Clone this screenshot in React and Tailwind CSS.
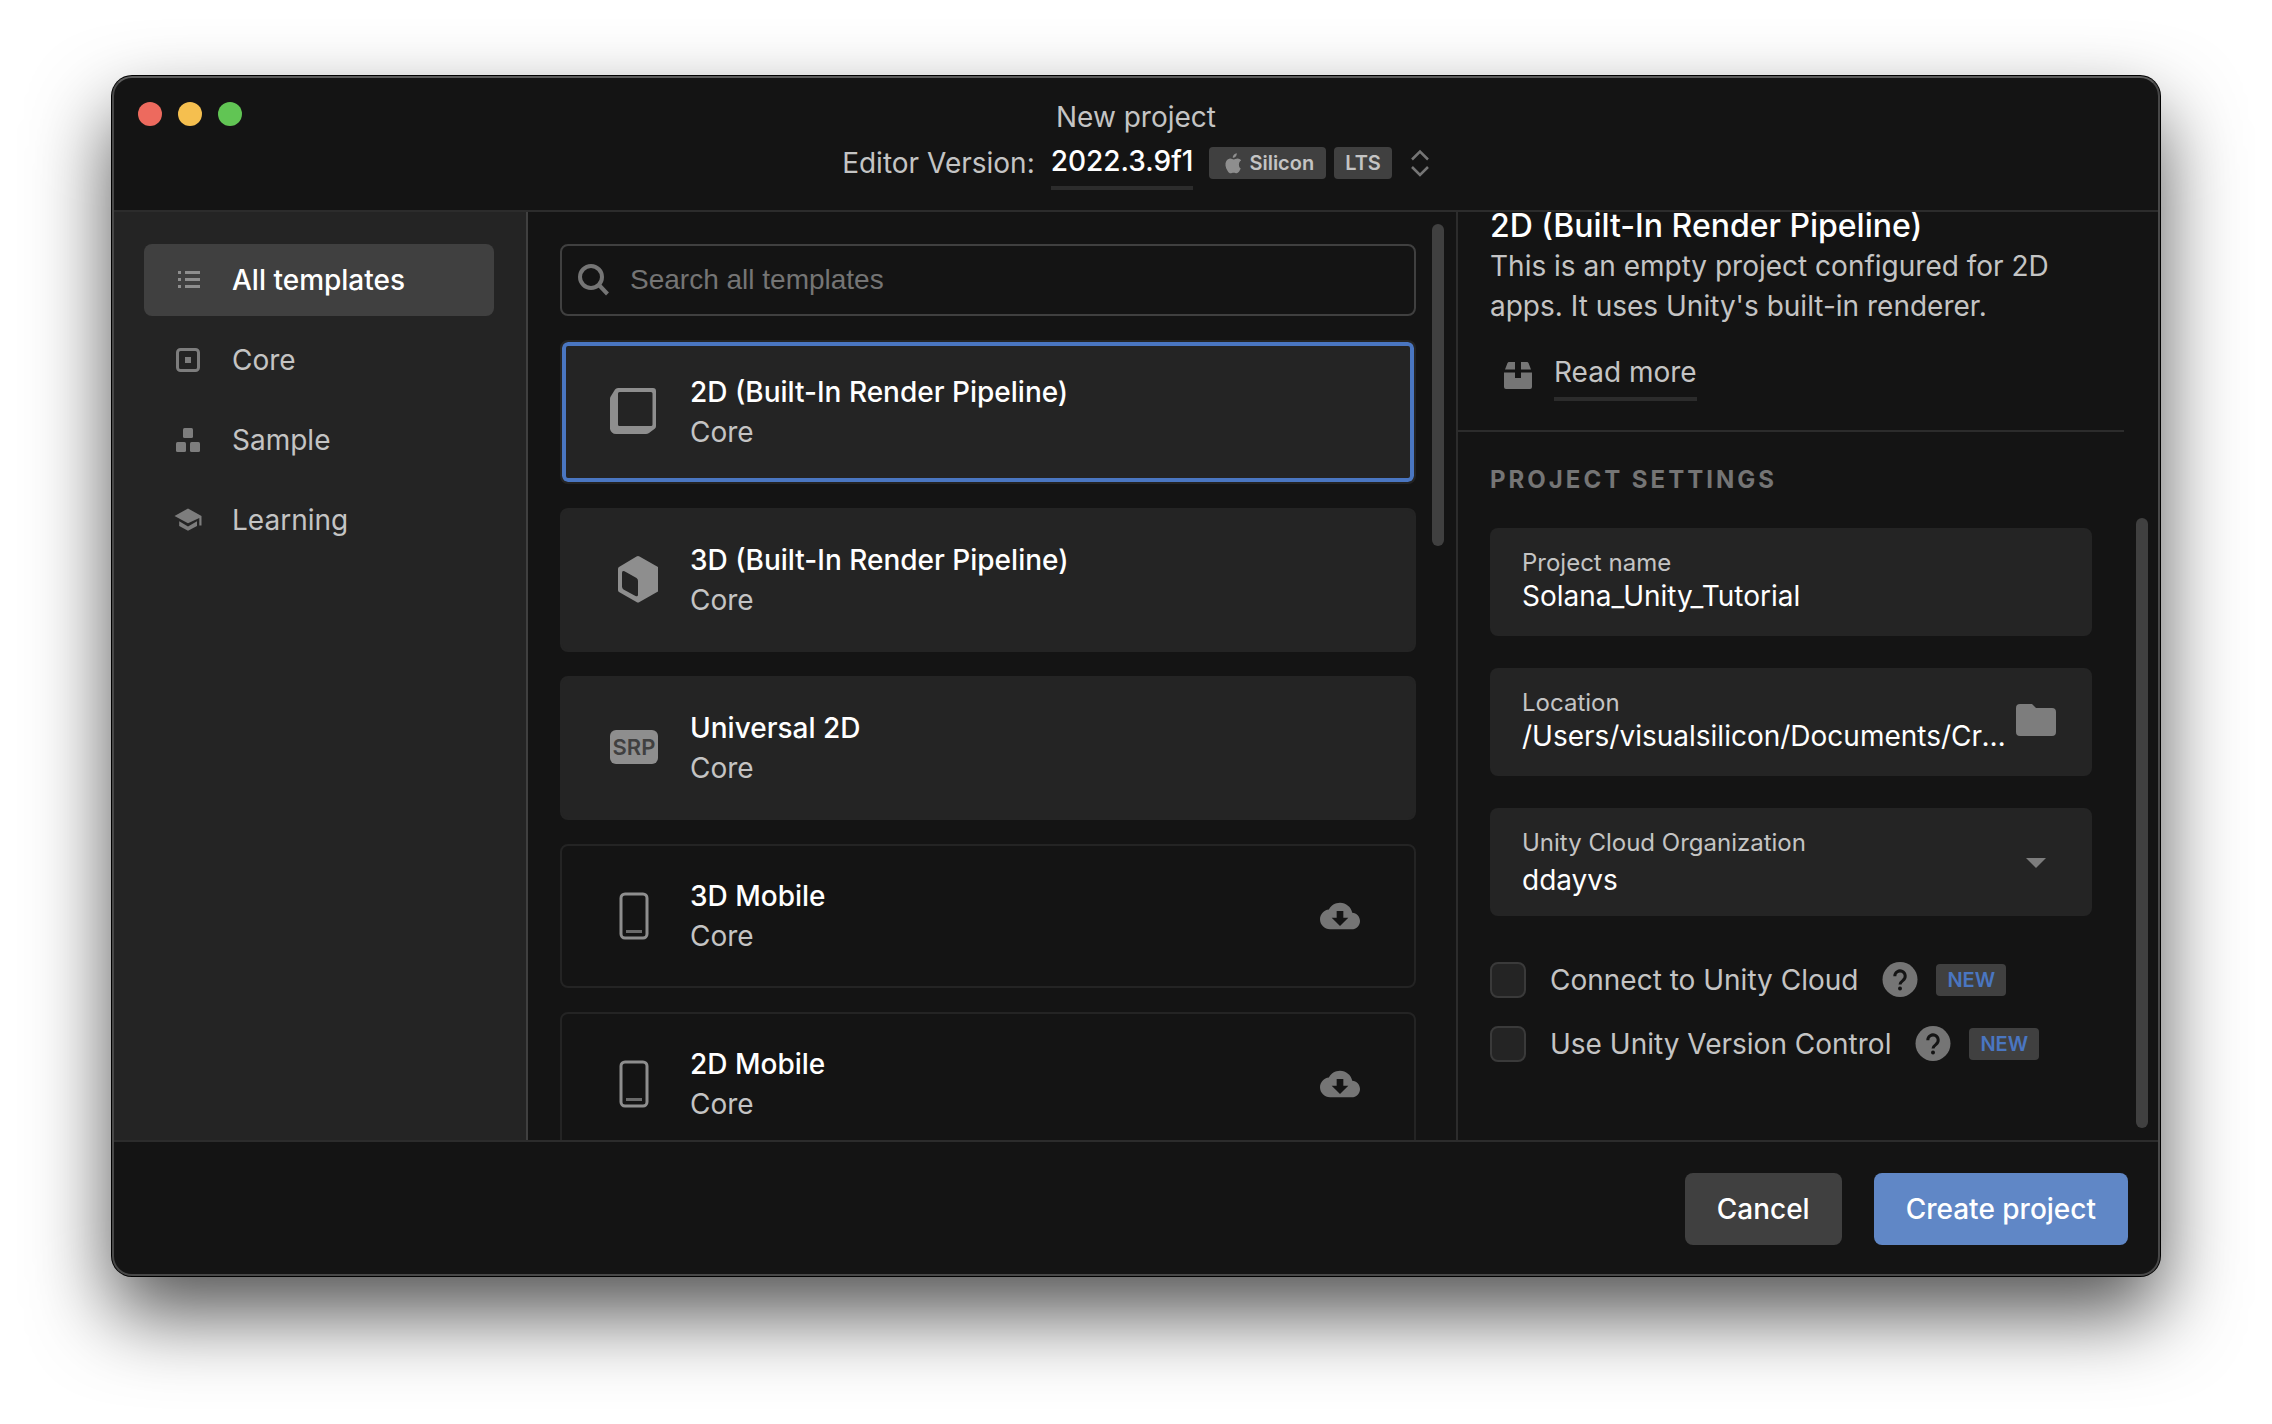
import { useState } from 'react';

const NAV = ['All templates', 'Core', 'Sample', 'Learning'];

function NavIcon({ name }) {
  return (
    <svg viewBox="0 0 28 28" className="size-7 shrink-0" fill="currentColor" aria-hidden="true">
      {name === 'All templates' && (
        <>
          <path d="M4 5h3v3H4zM4 12h3v3H4zM4 19h3v3H4z" />
          <path d="M11 5h15v3H11zM11 12h15v3H11zM11 19h15v3H11z" />
        </>
      )}
      {name === 'Core' && (
        <>
          <rect x="3.5" y="3.5" width="21" height="21" rx="3" fill="none" stroke="currentColor" strokeWidth="3" />
          <rect x="11" y="11" width="6" height="6" />
        </>
      )}
      {name === 'Sample' && (
        <>
          <rect x="9" y="2" width="10" height="10" rx="1.5" />
          <rect x="2" y="16" width="10" height="10" rx="1.5" />
          <rect x="16" y="16" width="10" height="10" rx="1.5" />
        </>
      )}
      {name === 'Learning' && (
        <>
          <path d="M0.5 10 14 2.500l13.500 7.500v9.500h-2.200v-7.600L14 17.300z" />
          <path d="M5.200 15.200 14 20.400l9-5.200v4.800L14 24.800 5.200 20z" />
        </>
      )}
    </svg>
  );
}

function TemplateIcon({ kind }) {
  return (
    <svg viewBox="0 0 64 64" className="size-16 shrink-0 text-[#8e8e8e]" fill="currentColor" aria-hidden="true">
      {kind === '2d' && (
        <path
          fillRule="evenodd"
          d="M16 8h35q3 0 3 3v35q0 1.500-1 2.500l-6 4.500q-1.500 1-3 1H14q-2.500 0-4-1.500T8 49V19q0-2 1-3l4-6.500Q14 8 16 8zM17.500 12q-1.500 0-1.500 1.500v31q0 1.500 1.500 1.500h31.500q1.500 0 1.500-1.500v-31q0-1.500-1.500-1.500z"
        />
      )}
      {kind === '3d' && (
        <path
          fillRule="evenodd"
          d="M34.500 8.500q1.500-1 3 0L56 19v24.500L37.500 54q-1.500 1-3 0L17 44q-1-.5-1-2V21q0-1.500 1-2zM20 25v13.500q0 2 1.500 3l12 6.500q2.500 1.200 2.500-1.500V33q0-2-1.500-3l-12-6.700Q20 22 20 25z"
        />
      )}
      {kind === 'srp' && (
        <>
          <rect x="8" y="14" width="48" height="34" rx="6" />
          <text x="32" y="39" textAnchor="middle" fontFamily="Inter, sans-serif" fontSize="22" fontWeight="600" fill="#404040">
            SRP
          </text>
        </>
      )}
      {kind === 'mobile' && (
        <>
          <rect x="19" y="10" width="26" height="44" rx="4" fill="none" stroke="currentColor" strokeWidth="3" />
          <rect x="24" y="46" width="16" height="3" opacity="0.7" />
        </>
      )}
    </svg>
  );
}

const TEMPLATES = [
  { name: '2D (Built-In Render Pipeline)', kind: '2d', installed: true },
  { name: '3D (Built-In Render Pipeline)', kind: '3d', installed: true },
  { name: 'Universal 2D', kind: 'srp', installed: true },
  { name: '3D Mobile', kind: 'mobile', installed: false },
  { name: '2D Mobile', kind: 'mobile', installed: false },
];

function TemplateCard({ template, selected, onSelect }) {
  return (
    <button
      type="button"
      aria-pressed={selected}
      onClick={onSelect}
      className={
        'flex h-36 w-full shrink-0 items-center rounded-lg border-2 border-[#242424] pr-[54px] pl-10 text-left ' +
        (template.installed ? 'bg-[#242424] ' : '') +
        (selected ? 'inset-ring-4 inset-ring-[#4a76c1]' : '')
      }
    >
      <TemplateIcon kind={template.kind} />
      <span className="ml-6 flex-1 leading-10">
        <span className="block font-medium text-white">{template.name}</span>
        <span className="block">Core</span>
      </span>
      {!template.installed && (
        <svg viewBox="0 0 24 24" className="size-10 text-[#757575]" fill="currentColor" aria-hidden="true">
          <path d="M19.350 10.040C18.670 6.590 15.640 4 12 4 9.110 4 6.600 5.640 5.350 8.040 2.340 8.360 0 10.910 0 14c0 3.310 2.690 6 6 6h13c2.760 0 5-2.240 5-5 0-2.640-2.050-4.780-4.650-4.960zM17 13l-5 5-5-5h3V9h4v4h3z" />
        </svg>
      )}
    </button>
  );
}

function Cap({ id, children }) {
  return (
    <label htmlFor={id} className="block text-2xl leading-8">
      {children}
    </label>
  );
}

function CheckRow({ id, children }) {
  return (
    <div className="flex h-9 items-center">
      <input
        id={id}
        type="checkbox"
        className="size-9 shrink-0 appearance-none rounded-lg border-2 border-[#3a3a3a] bg-[#242424] checked:bg-[#4a76c1]"
      />
      <label htmlFor={id} className="ml-6">
        {children}
      </label>
      <button type="button" aria-label="Help" className="ml-6">
        <svg viewBox="0 0 36 36" className="size-9" aria-hidden="true">
          <circle cx="18" cy="17.500" r="17.500" fill="#757575" />
          <path d="M12.800 14.200a5.200 5.200 0 1 1 8.300 4.100c-2 1.500-3.100 2.300-3.100 4.300" fill="none" stroke="#141414" strokeWidth="3" />
          <circle cx="18" cy="26.400" r="2" fill="#141414" />
        </svg>
      </button>
      <span className="ml-[18px] rounded bg-[#404040] px-[11px] text-xl leading-8 font-semibold text-[#4a76c1]">NEW</span>
    </div>
  );
}

export default function App() {
  const [nav, setNav] = useState(NAV[0]);
  const [selected, setSelected] = useState(0);
  return (
    <div className="flex h-screen flex-col bg-white px-28 pt-19 pb-37 font-['Inter',sans-serif] text-[28px] text-[#c4c4c4]">
      <main className="flex min-h-0 flex-1 flex-col overflow-hidden rounded-[20px] border-2 border-t-[#5c5c5c] border-r-[#484848] border-b-[#484848] border-l-[#484848] bg-[#141414] shadow-[0_0_0_1px_#000,0_38px_80px_rgba(0,0,0,0.68)]">
        <header className="grid h-[134px] shrink-0 grid-cols-[1fr_auto_1fr] border-b-2 border-[#2c2c2c] px-6">
          <div className="flex gap-4 pt-6">
            <button type="button" aria-label="Close" className="size-6 rounded-full bg-[#ed6a5e]" />
            <button type="button" aria-label="Minimize" className="size-6 rounded-full bg-[#f5bf4f]" />
            <button type="button" aria-label="Zoom" className="size-6 rounded-full bg-[#61c554]" />
          </div>
          <div className="flex flex-col items-center pt-5">
            <h1 className="leading-[38px]">New project</h1>
            <div className="flex items-start">
              <span className="mt-1 leading-[46px]">Editor Version:</span>
              <button type="button" className="ml-4 flex items-start">
                <span className="border-b-4 border-[#2c2c2c] leading-[50px] font-medium text-white">2022.3.9f1</span>
                <span className="mt-[11px] ml-4 flex items-center gap-1 rounded bg-[#404040] px-3 text-xl leading-8 font-semibold">
                  <svg viewBox="0 0 24 24" className="size-6 text-[#8e8e8e]" fill="currentColor" aria-hidden="true">
                    <path d="M19.800 17.600c-.5 1.200-1.100 2.100-1.700 3-.9 1.200-1.700 1.700-2.600 1.700-.8 0-1.600-.6-2.900-.6s-2.200.6-3 .6c-1 0-1.900-.8-2.800-2.100C4.300 16.800 3.800 12.600 5.200 10.200 6.200 8.500 7.800 7.600 9.300 7.600c1.400 0 2.300.8 3.500.8 1.100 0 2.100-.9 3.800-.9 1.300 0 2.600.7 3.500 1.900-3.100 1.700-2.600 6.700-.3 8.200zM15.800 2.200c.2 2.400-1.800 4.700-4 4.600-.2-2.100 1.800-4.400 4-4.600z" />
                  </svg>
                  Silicon
                </span>
                <span className="mt-[11px] ml-2 rounded bg-[#404040] px-[11px] text-xl leading-8 font-semibold">LTS</span>
                <svg viewBox="0 0 20 28" className="mt-[13px] ml-[18px] h-7 w-5 text-[#757575]" fill="none" stroke="currentColor" strokeWidth="2.500" aria-hidden="true">
                  <path d="M2 10.500 10 2.500l8 8M2 18l8 8 8-8" />
                </svg>
              </button>
            </div>
          </div>
        </header>

        <div className="flex min-h-0 flex-1">
          <nav className="flex w-[414px] shrink-0 flex-col gap-2 border-r-2 border-[#404040] bg-[#242424] pt-8 pr-8 pl-[30px]">
            {NAV.map((n) => (
              <button
                key={n}
                type="button"
                onClick={() => setNav(n)}
                className={
                  'flex h-18 items-center gap-[30px] rounded-lg pl-[30px] text-left ' +
                  (n === nav ? 'bg-[#404040] font-medium text-white' : '')
                }
              >
                <span className={n === nav ? 'text-[#8e8e8e]' : 'text-[#7d7d7d]'}>
                  <NavIcon name={n} />
                </span>
                {n}
              </button>
            ))}
          </nav>

          <section className="flex min-w-0 flex-1 overflow-hidden pt-3">
            <div className="flex flex-1 flex-col gap-6 pt-5 pl-8">
              <div className="flex h-18 shrink-0 items-center rounded-lg border-2 border-[#404040] pl-4">
                <svg viewBox="0 0 32 32" className="size-8 text-[#757575]" fill="none" stroke="currentColor" strokeWidth="4" aria-hidden="true">
                  <circle cx="13" cy="13" r="11" />
                  <path d="M20.500 20.500 29.500 30" />
                </svg>
                <input
                  aria-label="Search all templates"
                  placeholder="Search all templates"
                  className="ml-5 h-full flex-1 bg-transparent font-['Liberation_Sans',Arial,sans-serif] outline-none placeholder:text-[#757575]"
                />
              </div>
              {TEMPLATES.map((t, i) => (
                <TemplateCard key={t.name} template={t} selected={i === selected} onSelect={() => setSelected(i)} />
              ))}
            </div>
            <div className="mr-3 ml-4 h-[322px] w-3 rounded-full bg-[#404040]" />
          </section>

          <aside className="flex w-[702px] shrink-0 flex-col border-l-2 border-[#2c2c2c]">
            <div className="mr-[34px] flex h-[220px] shrink-0 flex-col justify-end overflow-hidden border-b-2 border-[#2c2c2c] pb-[29px] pl-8">
              <h2 className="text-[32px] leading-10 font-medium text-white">2D (Built-In Render Pipeline)</h2>
              <p className="max-w-[600px] leading-10">
                This is an empty project configured for 2D apps. It uses Unity's built-in renderer.
              </p>
              <div className="mt-[21px] flex items-start">
                <svg viewBox="0 0 28 28" className="mt-[15px] ml-[14px] size-7 text-[#757575]" fill="currentColor" aria-hidden="true">
                  <path d="M4.500 0H11v7.500H1L3.500 1zM17 0h6.500l1 1L27 7.500H17z" />
                  <path d="M0 10.500h11V16h6v-5.500h11V25q0 2-2 2H2q-2 0-2-2z" />
                </svg>
                <a href="#read-more" className="ml-[22px] border-b-4 border-[#2c2c2c] leading-[50px]">
                  Read more
                </a>
              </div>
            </div>
            <div className="flex min-h-0 flex-1">
              <form className="flex flex-1 flex-col pt-8 pl-8" onSubmit={(e) => e.preventDefault()}>
                <h3 className="text-2xl leading-8 font-bold tracking-[3px] text-[#757575]">PROJECT SETTINGS</h3>
                <div className="mt-8 flex flex-col gap-8">
                  <div className="h-27 rounded-lg bg-[#242424] px-8 pt-[19px]">
                    <Cap id="name">Project name</Cap>
                    <input id="name" defaultValue="Solana_Unity_Tutorial" className="block h-[34px] w-full bg-transparent text-white outline-none" />
                  </div>
                  <div className="flex h-27 rounded-lg bg-[#242424] pt-[19px] pr-8 pl-8">
                    <div className="w-[484px]">
                      <Cap id="location">Location</Cap>
                      <input
                        id="location"
                        readOnly
                        value="/Users/visualsilicon/Documents/Creative/Projects"
                        className="block h-[34px] w-full bg-transparent text-ellipsis text-white outline-none"
                      />
                    </div>
                    <button type="button" aria-label="Choose folder" className="mt-[15px] ml-2.5 h-9 w-10 text-[#7d7d7d]">
                      <svg viewBox="0 0 40 32" className="h-8 w-10" fill="currentColor" aria-hidden="true">
                        <path d="M4 0h12l4 4h16q4 0 4 4v20q0 4-4 4H4q-4 0-4-4V4q0-4 4-4z" />
                      </svg>
                    </button>
                  </div>
                  <div className="relative h-27 rounded-lg bg-[#242424] px-8 pt-[19px]">
                    <Cap id="org">Unity Cloud Organization</Cap>
                    <select id="org" className="block h-[38px] w-full appearance-none bg-transparent text-white outline-none">
                      <option>ddayvs</option>
                    </select>
                    <svg viewBox="0 0 20 10" className="pointer-events-none absolute top-[50px] right-[46px] h-2.5 w-5 text-[#7d7d7d]" fill="currentColor" aria-hidden="true">
                      <path d="M0 0h20L10 10z" />
                    </svg>
                  </div>
                </div>
                <div className="mt-[46px] flex flex-col gap-7">
                  <CheckRow id="cloud">Connect to Unity Cloud</CheckRow>
                  <CheckRow id="vcs">Use Unity Version Control</CheckRow>
                </div>
              </form>
              <div className="mt-[86px] mr-2.5 mb-3 ml-11 w-3 rounded-full bg-[#404040]" />
            </div>
          </aside>
        </div>

        <footer className="flex h-[134px] shrink-0 items-center justify-end gap-8 border-t-2 border-[#2c2c2c] pt-0.5 pr-[30px]">
          <button type="button" className="h-18 rounded-lg bg-[#404040] px-8 font-medium text-white">
            Cancel
          </button>
          <button type="button" className="h-18 rounded-lg bg-[#6087c6] px-8 font-medium text-white">
            Create project
          </button>
        </footer>
      </main>
    </div>
  );
}
